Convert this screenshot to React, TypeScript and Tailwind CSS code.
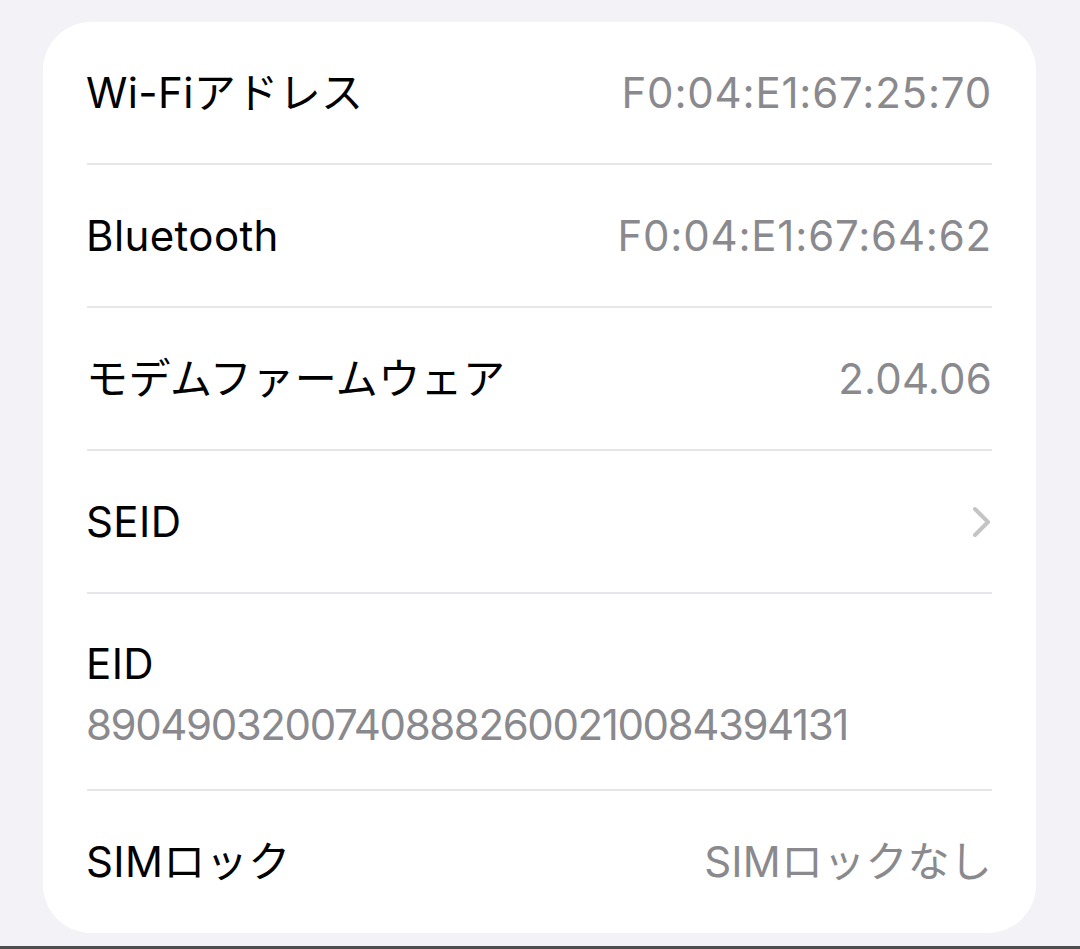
const FONT = {
  fontFamily: 'Inter, "Noto Sans CJK JP", sans-serif',
};

type Row =
  | { kind: "value"; label: string; value: string; mono?: boolean }
  | { kind: "link"; label: string }
  | { kind: "stacked"; label: string; value: string };

const rows: Row[] = [
  { kind: "value", label: "Wi-Fiアドレス", value: "F0:04:E1:67:25:70", mono: true },
  { kind: "value", label: "Bluetooth", value: "F0:04:E1:67:64:62", mono: true },
  { kind: "value", label: "モデムファームウェア", value: "2.04.06" },
  { kind: "link", label: "SEID" },
  { kind: "stacked", label: "EID", value: "89049032007408882600210084394131" },
  { kind: "value", label: "SIMロック", value: "SIMロックなし" },
];

function Divider() {
  return <div className="mx-[44px] h-[2px] bg-[#e5e5ea]" />;
}

function Chevron() {
  return (
    <svg
      className="h-[32px] w-[20px] text-[#c4c4c7]"
      viewBox="0 0 20 32"
      fill="none"
      stroke="currentColor"
      strokeWidth={4}
      aria-hidden="true"
    >
      <path strokeLinecap="round" strokeLinejoin="round" d="M3 3l13 13L3 29" />
    </svg>
  );
}

function InfoRow({ row }: { row: Row }) {
  if (row.kind === "stacked") {
    return (
      <div className="flex h-[195px] flex-col justify-center gap-[11px] pl-[43px] pr-[44px] pt-[6px]">
        <span className="text-[42px] leading-[50px] tracking-[0.4px] text-black">{row.label}</span>
        <span className="text-[42px] leading-[50px] tracking-[-1.4px] text-[#8a8a8e]">{row.value}</span>
      </div>
    );
  }

  return (
    <div className="flex h-[141px] items-center justify-between pl-[43px] pr-[44px]">
      <span className="text-[42px] leading-[50px] tracking-[0.4px] text-black">{row.label}</span>
      {row.kind === "value" ? (
        <span
          className={`text-[42px] leading-[50px] text-[#8a8a8e] ${
            row.mono ? "tracking-[0.8px]" : "tracking-[0.2px]"
          }`}
        >
          {row.value}
        </span>
      ) : (
        <Chevron />
      )}
    </div>
  );
}

export default function App() {
  return (
    <div className="flex h-[949px] w-full flex-col bg-[#f2f2f7]" style={FONT}>
      <div className="ml-[43px] mt-[22px] h-[911px] w-[993px] overflow-hidden rounded-[48px] bg-white">
        {rows.map((row, i) => (
          <div key={row.label}>
            {i > 0 && <Divider />}
            <InfoRow row={row} />
          </div>
        ))}
      </div>
      <div className="flex-1" />
      <div className="h-[3px] bg-[#4d4d4d]" />
    </div>
  );
}
